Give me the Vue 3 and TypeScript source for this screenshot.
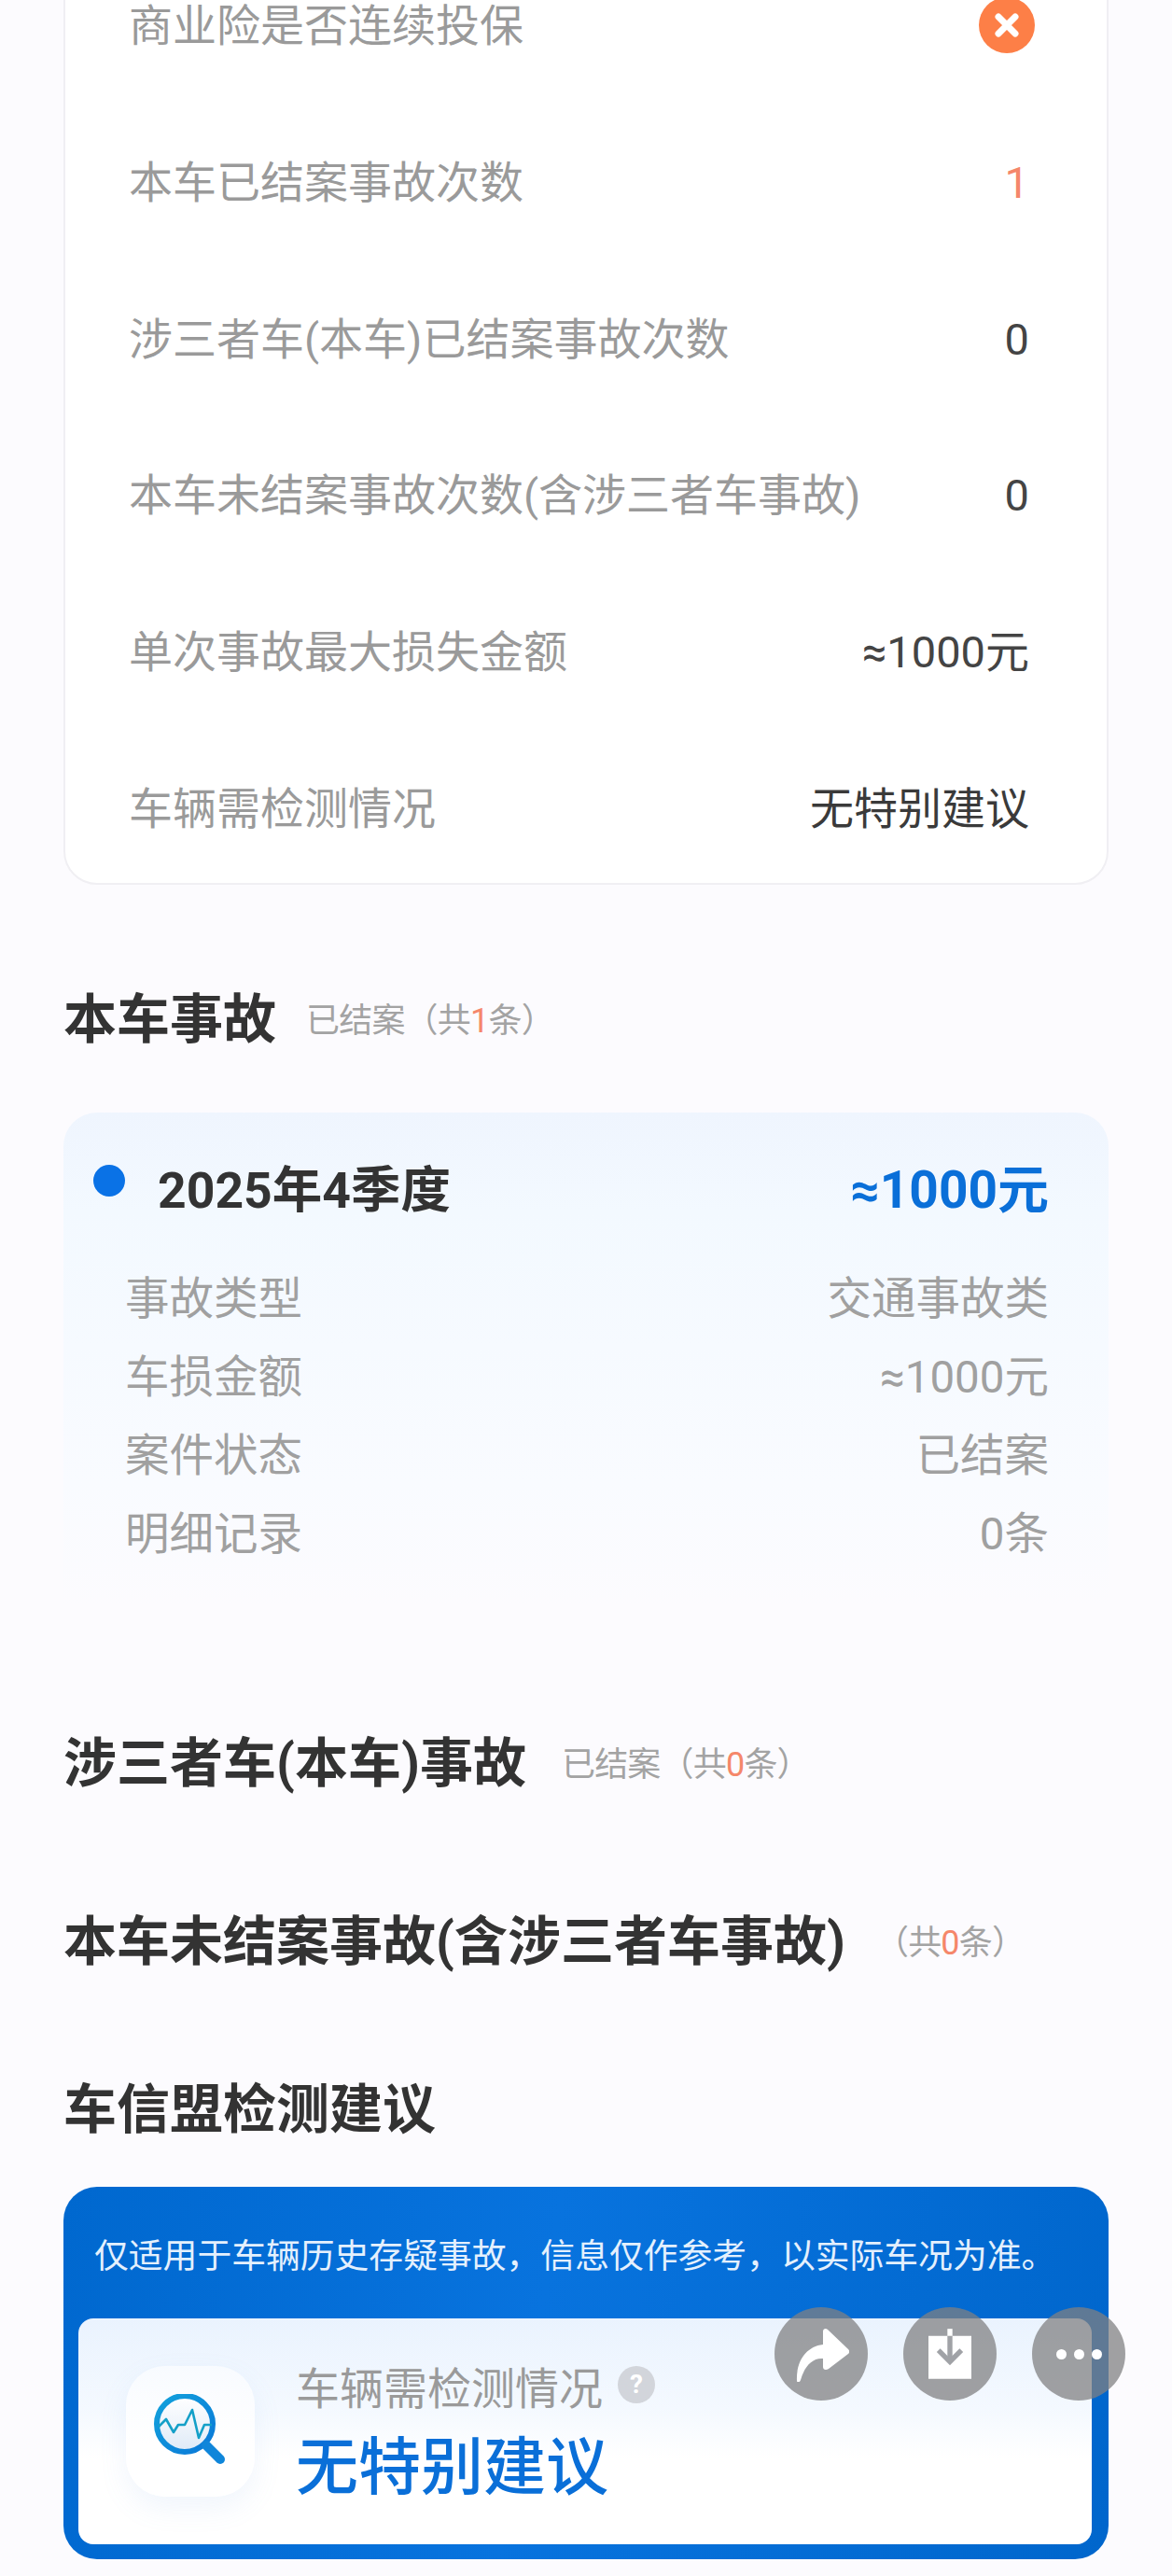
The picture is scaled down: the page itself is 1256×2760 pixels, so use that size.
<script setup lang="ts">
interface Row {
  label: string;
  value?: string;
  kind?: "fail" | "warn" | "dark";
}

const summaryRows: Row[] = [
  { label: "商业险是否连续投保", kind: "fail" },
  { label: "本车已结案事故次数", value: "1", kind: "warn" },
  { label: "涉三者车(本车)已结案事故次数", value: "0" },
  { label: "本车未结案事故次数(含涉三者车事故)", value: "0" },
  { label: "单次事故最大损失金额", value: "≈1000元" },
  { label: "车辆需检测情况", value: "无特别建议", kind: "dark" },
];

const accidentRows: Row[] = [
  { label: "事故类型", value: "交通事故类" },
  { label: "车损金额", value: "≈1000元" },
  { label: "案件状态", value: "已结案" },
  { label: "明细记录", value: "0条" },
];
</script>

<template>
  <div class="page">
    <section class="summary">
      <div v-for="row in summaryRows" :key="row.label" class="summary-row">
        <span class="summary-label">{{ row.label }}</span>
        <svg v-if="row.kind === 'fail'" class="fail-icon" viewBox="0 0 60 60">
          <circle cx="30" cy="30" r="30" fill="#fd7f47" />
          <path d="M21 21L39 39M39 21L21 39" stroke="#fff" stroke-width="7" stroke-linecap="round" />
        </svg>
        <span v-else class="summary-value" :class="row.kind">{{ row.value }}</span>
      </div>
    </section>

    <h2 class="heading first">
      本车事故<small class="gap-first">已结案（共<em>1</em>条）</small>
    </h2>

    <section class="accident">
      <div class="accident-head">
        <i class="dot"></i>
        <span class="quarter">2025年4季度</span>
        <span class="amount">≈1000元</span>
      </div>
      <div class="accident-rows">
        <div v-for="row in accidentRows" :key="row.label" class="accident-row">
          <span>{{ row.label }}</span>
          <span>{{ row.value }}</span>
        </div>
      </div>
    </section>

    <h2 class="heading second">
      涉三者车(本车)事故<small class="gap-lg">已结案（共<em>0</em>条）</small>
    </h2>
    <h2 class="heading third">
      本车未结案事故(含涉三者车事故)<small class="gap-sm">（共<em>0</em>条）</small>
    </h2>
    <h2 class="heading fourth">车信盟检测建议</h2>

    <section class="advice">
      <p class="advice-note">仅适用于车辆历史存疑事故，信息仅作参考，以实际车况为准。</p>
      <div class="advice-panel">
        <div class="advice-icon">
          <svg viewBox="0 0 80 80" width="80" height="80">
            <defs>
              <linearGradient id="lens" x1="0" y1="0" x2="1" y2="1">
                <stop offset="0" stop-color="#12a2dc" />
                <stop offset="1" stop-color="#0a78d8" />
              </linearGradient>
              <linearGradient id="glass" x1="0" y1="0" x2="0" y2="1">
                <stop offset="0" stop-color="#ffffff" />
                <stop offset="1" stop-color="#dfeaf7" />
              </linearGradient>
            </defs>
            <circle cx="33" cy="32" r="30" fill="url(#glass)" />
            <circle cx="33" cy="32" r="30" fill="none" stroke="url(#lens)" stroke-width="6" />
            <path d="M56 55L71 70" stroke="#0f86da" stroke-width="10" stroke-linecap="round" />
            <path
              d="M5 35L13 27L21 41L26 33L33 33L41 17L48 47L54 33L62 33"
              fill="none"
              stroke="#14a0c8"
              stroke-width="2.6"
              stroke-linejoin="round"
            />
          </svg>
        </div>
        <div class="advice-text">
          <div class="advice-label">
            车辆需检测情况
            <span class="help">?</span>
          </div>
          <div class="advice-value">无特别建议</div>
        </div>
      </div>
    </section>

    <div class="float-actions">
      <button class="float-btn" type="button" aria-label="分享">
        <svg viewBox="0 0 60 60" width="60" height="60">
          <path
            d="M4 59C3 38 14 22 32 20L32 6C32 3 35 2 37 4L59 25C61 27 60 29 59 30L38 46C35 48 32 47 32 44L32 35C20 34 12 44 8 58C7 61 4 61 4 59Z"
            fill="#fff"
          />
        </svg>
      </button>
      <button class="float-btn" type="button" aria-label="保存">
        <svg viewBox="0 0 60 70" width="46" height="54">
          <path d="M0 10H60V70H0Z" fill="#fff" />
          <path d="M30 0V10" stroke="#fff" stroke-width="7" />
          <path d="M30 10V44" stroke="#a0a2a6" stroke-width="7" />
          <path d="M14 30L30 46L46 30" fill="none" stroke="#a0a2a6" stroke-width="7" />
        </svg>
      </button>
      <button class="float-btn dots" type="button" aria-label="更多">
        <i></i><i></i><i></i>
      </button>
    </div>
  </div>
</template>

<style>
html,
body {
  margin: 0;
  background: #fcfbfe;
}
</style>

<style scoped>
.page {
  position: relative;
  width: 1256px;
  height: 2760px;
  overflow: hidden;
  box-sizing: border-box;
  padding: 0 68px;
  background: #fcfbfe;
  font-family: Roboto, "Noto Sans CJK SC", sans-serif;
}

/* Top card, scrolled partly out of view */
.summary {
  margin-top: -80px;
  padding: 22px 83px 0 68px;
  background: #fff;
  border: 2px solid #f0eff3;
  border-radius: 36px;
  box-sizing: border-box;
  height: 1028px;
}

.summary-row {
  display: flex;
  align-items: center;
  justify-content: space-between;
  height: 167.7px;
  font-size: 47px;
  line-height: 1;
}

.summary-label {
  color: #9a9a9a;
}

.summary-value {
  color: #444;
}

.summary-value.warn {
  color: #f5876a;
}

.summary-value.dark {
  color: #3a3a3a;
}

.fail-icon {
  width: 60px;
  height: 60px;
  margin: -2px -6px 0 0;
}

.heading {
  display: flex;
  align-items: center;
  height: 80px;
  margin: 0;
  color: #333;
  font-size: 57px;
  font-weight: 700;
}

.heading small {
  margin-top: 6px;
  color: #a3a3a3;
  font-size: 36px;
  font-weight: 400;
  letter-spacing: -0.8px;
}

.heading em {
  color: #f5876a;
  font-style: normal;
}

.gap-first {
  margin-left: 32px;
}

.gap-lg {
  margin-left: 38px;
}

.gap-sm {
  margin-left: 32px;
}

.first {
  margin-top: 99px;
}

.second {
  margin-top: 124px;
}

.third {
  margin-top: 111px;
}

.fourth {
  margin-top: 100px;
}

/* Accident card */
.accident {
  box-sizing: border-box;
  height: 528px;
  margin-top: 65px;
  padding: 38px 64px 0 32px;
  border-radius: 36px 36px 0 0;
  background: linear-gradient(180deg, #eff5fe 0%, #f3f9ff 20%, #f9fbff 75%, #fcfbfe 100%);
}

.accident-head {
  display: flex;
  align-items: center;
  height: 80px;
}

.dot {
  width: 34px;
  height: 34px;
  margin: -10px 35px 0 0;
  border-radius: 50%;
  background: #0a72e6;
}

.quarter {
  flex: 1;
  color: #333;
  font-size: 53.5px;
  font-weight: 700;
}

.amount {
  color: #0a6fd8;
  font-size: 55px;
  font-weight: 700;
}

.accident-rows {
  margin: 35px 0 0 34px;
}

.accident-row {
  display: flex;
  align-items: center;
  justify-content: space-between;
  height: 84px;
  color: #a0a0a0;
  font-size: 47.5px;
}

/* Advice card */
.advice {
  box-sizing: border-box;
  height: 399px;
  margin-top: 48px;
  padding: 0 18px 16px 16px;
  border-radius: 36px;
  background: linear-gradient(100deg, #0068cf 0%, #0873de 45%, #0066cc 100%);
}

.advice-note {
  display: flex;
  align-items: center;
  height: 141px;
  margin: 0 0 0 17px;
  color: #e4f0fd;
  font-size: 36.8px;
  white-space: nowrap;
}

.advice-panel {
  display: flex;
  align-items: center;
  height: 242px;
  padding-left: 51px;
  border-radius: 16px;
  background: linear-gradient(180deg, #eaf3fe 0%, #f4f9ff 40%, #fff 62%);
}

.advice-icon {
  display: flex;
  align-items: center;
  justify-content: center;
  flex: none;
  width: 138px;
  height: 140px;
  border-radius: 42px;
  background: linear-gradient(180deg, #f8fbff 0%, #fff 60%);
  box-shadow: 0 12px 30px rgba(110, 160, 225, 0.1);
}

.advice-icon svg {
  margin-left: 2px;
}

.advice-text {
  margin-left: 44px;
  padding-top: 4px;
}

.advice-label {
  display: flex;
  align-items: center;
  gap: 16px;
  height: 60px;
  color: #9a9a9a;
  font-size: 47px;
}

.help {
  width: 40px;
  height: 40px;
  border-radius: 50%;
  background: #d2d5db;
  color: #fff;
  font-size: 28px;
  font-weight: 700;
  line-height: 40px;
  text-align: center;
}

.advice-value {
  height: 90px;
  margin-top: 14px;
  color: #0a6fd8;
  font-size: 67px;
  font-weight: 500;
  line-height: 90px;
}

/* Floating actions over the page */
.float-actions {
  position: absolute;
  top: 2472px;
  left: 830px;
  display: flex;
  gap: 38px;
}

.float-btn {
  display: flex;
  align-items: center;
  justify-content: center;
  gap: 8px;
  width: 100px;
  height: 100px;
  padding: 0;
  border: none;
  border-radius: 50%;
  background: rgba(128, 128, 130, 0.74);
}

.dots i {
  width: 11px;
  height: 11px;
  border-radius: 50%;
  background: #fff;
}
</style>
